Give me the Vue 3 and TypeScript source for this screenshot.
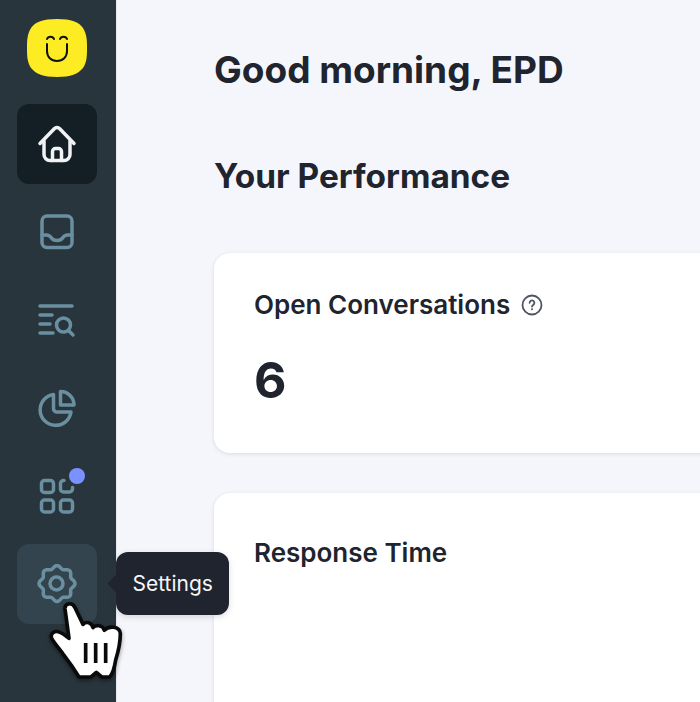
<script setup lang="ts">
// eight-lobed outline for the settings icon
function gearPath(cx: number, cy: number, r: number, bump: number): string {
  const pts: string[] = []
  for (let i = 0; i < 96; i++) {
    const a = (i / 96) * Math.PI * 2 - Math.PI / 2
    const rad = r + bump * Math.cos(8 * (a + Math.PI / 2))
    pts.push(`${(cx + rad * Math.cos(a)).toFixed(2)} ${(cy + rad * Math.sin(a)).toFixed(2)}`)
  }
  return `M${pts.join('L')}Z`
}

const navItems: { name: string; active?: boolean; hover?: boolean; dot?: boolean; paths: string[] }[] = [
  {
    name: 'home',
    active: true,
    paths: [
      'M3 19.5 17.5 4.5a3.5 3.5 0 0 1 5 0L37 19.5',
      'M7 17v13.5a6 6 0 0 0 6 6h14a6 6 0 0 0 6-6V17',
      'M15.5 36.5v-9a3 3 0 0 1 3-3h3a3 3 0 0 1 3 3v9',
    ],
  },
  {
    name: 'inbox',
    paths: [
      'M10 4h20a5 5 0 0 1 5 5v21.5a5 5 0 0 1-5 5H10a5 5 0 0 1-5-5V9a5 5 0 0 1 5-5Z',
      'M5 23h4.5c2.5 0 3.5 1 5 3 1 1.5 2.5 2.5 5.5 2.5s4.5-1 5.5-2.5c1.5-2 2.5-3 5-3H35',
    ],
  },
  {
    name: 'search',
    paths: [
      'M3 6h32',
      'M3 15h12',
      'M3 24h10',
      'M3 33h13',
      'M33.5 25a7 7 0 1 1-14 0 7 7 0 0 1 14 0Z',
      'M31.5 30.5l4.5 4.5',
    ],
  },
  {
    name: 'reports',
    paths: [
      'M16.5 6.5A15.5 15.5 0 1 0 34 24H20a3.5 3.5 0 0 1-3.5-3.5Z',
      'M23.5 3.5A13.5 13.5 0 0 1 37 17H23.5Z',
    ],
  },
  {
    name: 'apps',
    dot: true,
    paths: [
      'M7.5 4.5h6a3 3 0 0 1 3 3v6a3 3 0 0 1-3 3h-6a3 3 0 0 1-3-3v-6a3 3 0 0 1 3-3Z',
      'M27 4.5h-.5a3 3 0 0 0-3 3V13a3 3 0 0 0 3 3h6a3 3 0 0 0 3-3v-1.5',
      'M7.5 24h6a3 3 0 0 1 3 3v6a3 3 0 0 1-3 3h-6a3 3 0 0 1-3-3v-6a3 3 0 0 1 3-3Z',
      'M26.5 24h6a3 3 0 0 1 3 3v6a3 3 0 0 1-3 3h-6a3 3 0 0 1-3-3v-6a3 3 0 0 1 3-3Z',
    ],
  },
  {
    name: 'settings',
    hover: true,
    paths: [gearPath(20, 19.5, 16.5, 1.5), 'M26 19.5a6.5 6.5 0 1 1-13 0 6.5 6.5 0 0 1 13 0Z'],
  },
]
</script>

<template>
  <div class="page">
    <aside class="sidebar">
      <div class="logo">
        <svg width="60" height="58" viewBox="0 0 60 58">
          <path class="logo-shape" d="M30 0C44 0 52 3 56 9C60 16 60 22 60 29C60 36 60 43 56 49C51 55 44 58 30 58C16 58 9 55 4 49C0 43 0 36 0 29C0 22 0 16 4 9C8 3 16 0 30 0Z" />
          <path class="logo-line" d="M20 25v7c0 6 4 10 10 10s10-4 10-10v-7" />
          <path class="logo-line" d="M20 20c1-3 6-3 7 0M33 20c1-3 6-3 7 0" />
        </svg>
      </div>
      <nav class="nav">
        <div
          v-for="item in navItems"
          :key="item.name"
          class="nav-item"
          :class="{ active: item.active, hover: item.hover }"
        >
          <svg class="nav-icon" width="40" height="40" viewBox="0 0 40 40">
            <path v-for="d in item.paths" :key="d" :d="d" />
          </svg>
          <span v-if="item.dot" class="dot"></span>
        </div>
      </nav>
    </aside>

    <main class="content">
      <h1>Good morning, EPD</h1>
      <h2>Your Performance</h2>
      <section class="card first">
        <h3>
          Open Conversations
          <svg class="help" width="22" height="22" viewBox="0 0 22 22">
            <circle cx="11" cy="11" r="9.5" />
            <path d="M8.6 8.8a2.4 2.4 0 1 1 3.6 2.1c-.8.5-1.2.9-1.2 1.7" />
            <circle class="help-dot" cx="11" cy="15.3" r="1" />
          </svg>
        </h3>
        <div class="value">6</div>
      </section>
      <section class="card second">
        <h3>Response Time</h3>
      </section>
    </main>

    <div class="tooltip">Settings</div>

    <svg class="cursor" width="85" height="92" viewBox="0 0 255 276">
      <path
        class="hand"
        d="M60 42C58 24 82 20 90 38L114 88C124 78 140 82 144 98C152 88 174 90 178 106C190 92 224 92 226 115C226 140 220 170 212 195C208 220 202 238 194 246L170 246L154 232L138 246L102 246C90 226 72 200 55 178C42 160 28 145 20 130C14 115 30 105 45 112C55 116 64 124 72 130Z"
      />
      <path class="hand-line" d="M122 144v60M152 144v60M182 144v60" />
    </svg>
  </div>
</template>

<style>
html,
body {
  margin: 0;
  background: #f5f6fb;
  overflow: hidden;
}
</style>

<style scoped>
.page {
  position: relative;
  display: flex;
  width: 700px;
  height: 702px;
  overflow: hidden;
  background: #f5f6fb;
  color: #20242e;
  font-family: Inter, "Liberation Sans", sans-serif;
}

.sidebar {
  flex: 0 0 117px;
  box-sizing: border-box;
  padding-top: 19px;
  background: #29353c;
  border-right: 1px solid #e6e9f0;
}

.logo {
  display: flex;
  justify-content: center;
  height: 58px;
  padding-right: 2px;
}

.logo-shape {
  fill: #fdec24;
}

.logo-line {
  fill: none;
  stroke: #101010;
  stroke-width: 2;
  stroke-linecap: round;
}

.nav {
  display: flex;
  flex-direction: column;
  gap: 8px;
  margin-top: 27px;
  padding-left: 17px;
}

.nav-item {
  position: relative;
  display: flex;
  align-items: center;
  justify-content: center;
  width: 80px;
  height: 80px;
  border-radius: 12px;
}

.nav-item.active {
  background: #141f25;
}

.nav-item.hover {
  background: #34444e;
}

.nav-icon {
  fill: none;
  stroke: #6a8fa0;
  stroke-width: 3.5;
  stroke-linecap: round;
  stroke-linejoin: round;
}

.active .nav-icon {
  stroke: #f0f2f5;
}

.dot {
  position: absolute;
  top: 12px;
  right: 12px;
  width: 16px;
  height: 16px;
  border-radius: 50%;
  background: #7b91ff;
}

.content {
  flex: 1;
  min-width: 0;
  padding-left: 97px;
}

h1 {
  margin: 48px 0 0;
  font-size: 37px;
  line-height: 44px;
  font-weight: 700;
}

h2 {
  margin: 62px 0 0;
  font-size: 33.4px;
  line-height: 44px;
  font-weight: 700;
}

.card {
  box-sizing: border-box;
  width: 600px;
  padding: 37px 40px;
  background: #fff;
  border-radius: 16px;
  box-shadow: 0 1px 4px rgba(32, 36, 46, 0.12);
}

.card.first {
  height: 200px;
  margin-top: 55px;
}

.card.second {
  height: 260px;
  margin-top: 40px;
  padding-top: 45px;
}

h3 {
  display: flex;
  align-items: center;
  gap: 11px;
  margin: 0;
  font-size: 26px;
  line-height: 30px;
  font-weight: 600;
}

.help {
  fill: none;
  stroke: #4d5564;
  stroke-width: 1.8;
  stroke-linecap: round;
}

.help-dot {
  fill: #4d5564;
  stroke: none;
}

.value {
  margin-top: 30px;
  font-size: 50px;
  line-height: 60px;
  font-weight: 700;
}

.tooltip {
  position: absolute;
  top: 552px;
  left: 116px;
  box-sizing: border-box;
  width: 113px;
  height: 63px;
  padding-left: 16.5px;
  border-radius: 12px;
  background: #20242e;
  color: #f5f6fb;
  font-size: 21px;
  line-height: 63px;
  box-shadow: 0 2px 6px rgba(32, 36, 46, 0.15);
}

.tooltip::before {
  content: "";
  position: absolute;
  top: 25px;
  left: -6px;
  width: 13px;
  height: 13px;
  background: #20242e;
  transform: rotate(45deg);
}

.cursor {
  position: absolute;
  top: 595px;
  left: 45px;
  filter: drop-shadow(0 2px 2px rgba(0, 0, 0, 0.4));
}

.hand {
  fill: #fff;
  stroke: #0a0a0a;
  stroke-width: 11;
  stroke-linejoin: round;
}

.hand-line {
  fill: none;
  stroke: #0a0a0a;
  stroke-width: 11;
}
</style>
